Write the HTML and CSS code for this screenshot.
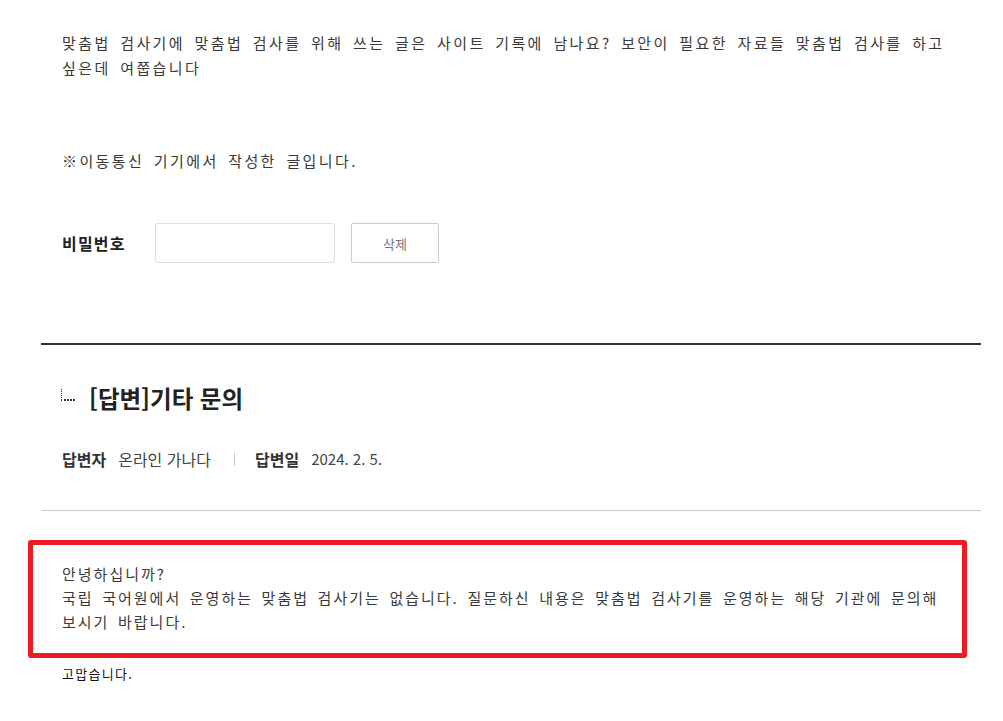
FILE: index.html
```html
<!DOCTYPE html>
<html lang="ko">
<head>
    <meta charset="UTF-8">
    <meta name="viewport" content="width=device-width, initial-scale=1.0">
    <title>온라인 가나다</title>
    <link rel="stylesheet" href="styles.css">
</head>
<body>
    <div class="board">
        <div class="question">
            <p class="q-text">맞춤법 검사기에 맞춤법 검사를 위해 쓰는 글은 사이트 기록에 남나요? 보안이 필요한 자료들 맞춤법 검사를 하고 싶은데 여쭙습니다</p>
            <p class="q-note">※이동통신 기기에서 작성한 글입니다.</p>
            <div class="pw-row">
                <label class="pw-label" for="pw">비밀번호</label>
                <input type="password" id="pw" class="pw-input">
                <button class="del-button">삭제</button>
            </div>
        </div>

        <div class="answer">
            <h2 class="answer-title">
                <svg class="reply-icon" width="14" height="13" viewBox="0 0 14 13">
                    <rect x="0" y="0" width="1" height="1"/>
                    <rect x="0" y="2" width="1" height="1"/>
                    <rect x="0" y="4" width="1" height="1"/>
                    <rect x="0" y="6" width="1" height="1"/>
                    <rect x="0" y="8" width="1" height="1"/>
                    <rect x="0" y="10" width="1" height="2"/>
                    <rect x="3" y="10" width="2" height="2"/>
                    <rect x="6" y="10" width="2" height="2"/>
                    <rect x="9" y="10" width="2" height="2"/>
                    <rect x="12" y="10" width="2" height="2"/>
                </svg>
                [답변]기타 문의
            </h2>
            <div class="answer-meta">
                <span class="meta-key">답변자</span>
                <span class="meta-val">온라인 가나다</span>
                <span class="meta-sep"></span>
                <span class="meta-key">답변일</span>
                <span class="meta-val date">2024. 2. 5.</span>
            </div>
            <div class="answer-body">
                <div class="highlight">
                    <p class="a-text">안녕하십니까?<br>국립 국어원에서 운영하는 맞춤법 검사기는 없습니다. 질문하신 내용은 맞춤법 검사기를 운영하는 해당 기관에 문의해 보시기 바랍니다.</p>
                </div>
                <p class="a-thanks">고맙습니다.</p>
            </div>
        </div>
    </div>
</body>
</html>
```

FILE: styles.css
```css
body {
    margin: 0;
    background: #fff;
    font-family: "Noto Sans CJK KR", "Noto Sans", sans-serif;
    color: #333;
}
p {
    margin: 0;
}
.board {
    width: 940px;
    margin-left: 41px;
}
.question {
    padding: 30px 0 80px 21px;
    border-bottom: 2px solid #333;
}
.q-text, .q-note {
    font-size: 15px;
    line-height: 25px;
    letter-spacing: 2.4px;
    word-spacing: 3px;
    word-break: keep-all;
    color: #3a3a3a;
}
.q-note {
    margin-top: 68px;
}
.pw-row {
    display: flex;
    align-items: center;
    margin-top: 50px;
}
.pw-label {
    width: 93px;
    font-size: 16px;
    font-weight: bold;
    letter-spacing: 1.2px;
    color: #222;
}
.pw-input {
    width: 180px;
    height: 40px;
    box-sizing: border-box;
    border: 1px solid #ddd;
    border-radius: 3px;
    margin: 0;
}
.del-button {
    width: 88px;
    height: 40px;
    margin-left: 16px;
    background: #fff;
    border: 1px solid #ccc;
    border-radius: 2px;
    font-family: inherit;
    font-size: 13px;
    color: #777;
}
.answer-title {
    display: flex;
    align-items: center;
    margin: 37px 0 0 20px;
    font-size: 23.5px;
    line-height: 32px;
    color: #222;
}
.reply-icon {
    fill: #333;
    margin: 0 14px 6px 0;
}
.answer-meta {
    display: flex;
    align-items: center;
    margin-top: 34px;
    padding: 0 0 40px 21px;
    font-size: 16px;
    line-height: 22px;
    border-bottom: 1px solid #ccc;
}
.meta-key {
    font-weight: bold;
    color: #333;
    margin-right: 12px;
}
.meta-val {
    color: #444;
}
.date {
    font-size: 15px;
}
.meta-sep {
    width: 1px;
    height: 14px;
    background: #ccc;
    margin: 0 20px 0 23px;
}
.answer-body {
    padding-top: 29px;
}
.highlight {
    box-sizing: border-box;
    margin-left: -13px;
    width: 939px;
    border: 5px solid #ed1c24;
    border-radius: 3px;
    padding: 17px 0 19px 29px;
}
.a-text {
    width: 895px;
    font-size: 15px;
    line-height: 24px;
    letter-spacing: 2px;
    word-spacing: 2.4px;
    word-break: keep-all;
    color: #3a3a3a;
}
.a-thanks {
    margin: 6px 0 0 21px;
    font-size: 13px;
    line-height: 20px;
    letter-spacing: 1.3px;
    color: #111;
}
```
